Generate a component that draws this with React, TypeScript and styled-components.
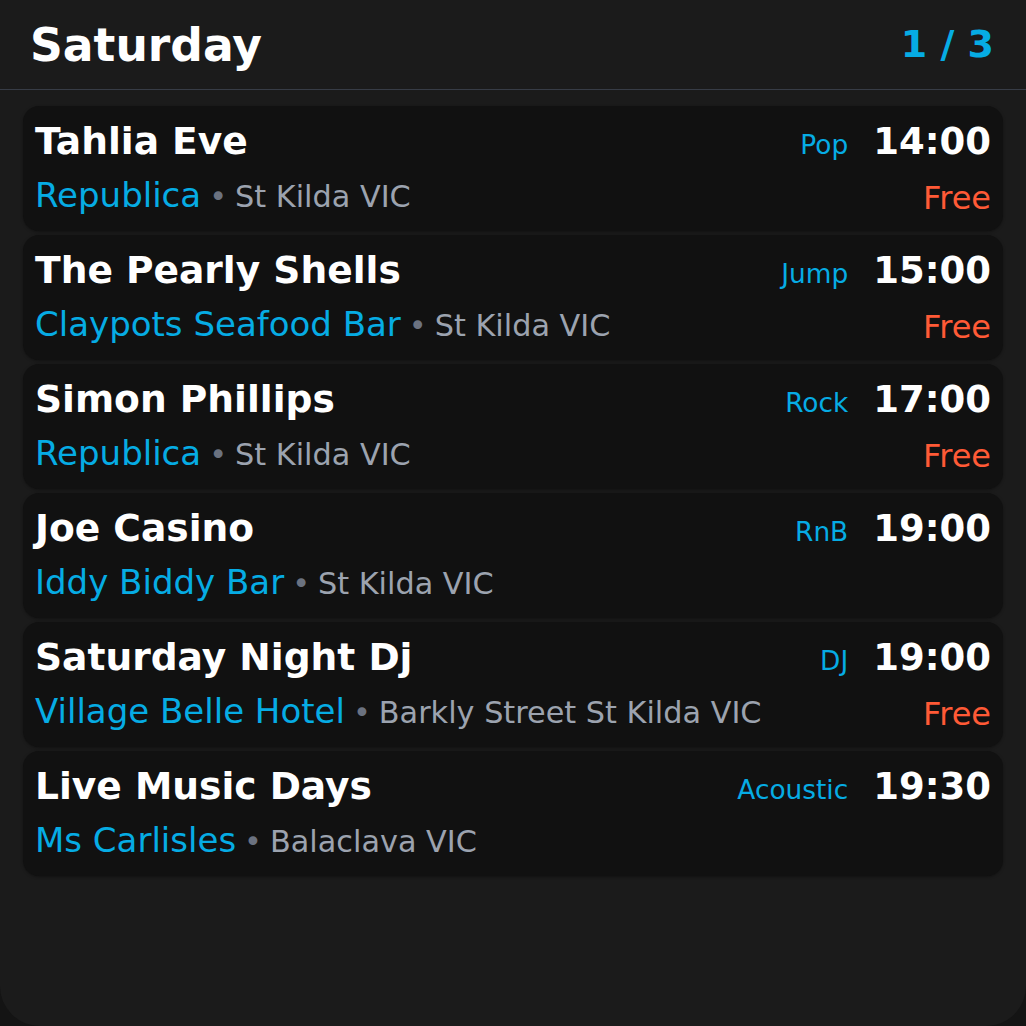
import styled, { createGlobalStyle } from 'styled-components';

interface Gig {
  name: string;
  venue: string;
  location: string;
  genre: string;
  time: string;
  price?: string;
}

const gigs: Gig[] = [
  { name: 'Tahlia Eve', venue: 'Republica', location: 'St Kilda VIC', genre: 'Pop', time: '14:00', price: 'Free' },
  { name: 'The Pearly Shells', venue: 'Claypots Seafood Bar', location: 'St Kilda VIC', genre: 'Jump', time: '15:00', price: 'Free' },
  { name: 'Simon Phillips', venue: 'Republica', location: 'St Kilda VIC', genre: 'Rock', time: '17:00', price: 'Free' },
  { name: 'Joe Casino', venue: 'Iddy Biddy Bar', location: 'St Kilda VIC', genre: 'RnB', time: '19:00' },
  { name: 'Saturday Night Dj', venue: 'Village Belle Hotel', location: 'Barkly Street St Kilda VIC', genre: 'DJ', time: '19:00', price: 'Free' },
  { name: 'Live Music Days', venue: 'Ms Carlisles', location: 'Balaclava VIC', genre: 'Acoustic', time: '19:30' },
];

export default function App() {
  return (
    <>
      <GlobalStyle />
      <Panel>
        <Header>
          <Day>Saturday</Day>
          <PageCount>1 / 3</PageCount>
        </Header>

        <List>
          {gigs.map((gig, index) => (
            <Card key={index}>
              <Left>
                <Name>{gig.name}</Name>
                <VenueLine>
                  <Venue>{gig.venue}</Venue>
                  <Location>
                    <Dot>•</Dot>
                    {gig.location}
                  </Location>
                </VenueLine>
              </Left>
              <Right>
                <TimeRow>
                  <Genre>{gig.genre}</Genre>
                  <Time>{gig.time}</Time>
                </TimeRow>
                {gig.price && <Price>{gig.price}</Price>}
              </Right>
            </Card>
          ))}
        </List>
      </Panel>
    </>
  );
}

const GlobalStyle = createGlobalStyle`
  html, body, #root {
    margin: 0;
    padding: 0;
    height: 100%;
  }

  body {
    background: #141414;
    font-family: 'DejaVu Sans', 'Liberation Sans', sans-serif;
  }
`;

const Panel = styled.div`
  height: 100vh;
  box-sizing: border-box;
  background: #1b1b1b;
  border-radius: 0 0 40px 40px;
  color: #ffffff;
  overflow: hidden;
`;

const Header = styled.div`
  display: flex;
  align-items: center;
  justify-content: space-between;
  padding: 19px 32px 17px 30px;
  border-bottom: 1px solid #373c46;
`;

const Day = styled.h1`
  margin: 0;
  font-size: 45.6px;
  font-weight: 700;
  color: #ffffff;
`;

const PageCount = styled.span`
  font-size: 38px;
  font-weight: 700;
  color: #06ace4;
  margin-top: -4px;
`;

const List = styled.div`
  display: flex;
  flex-direction: column;
  gap: 4px;
  padding: 16px 23px 0;
`;

const Card = styled.div`
  display: flex;
  justify-content: space-between;
  height: 125px;
  box-sizing: border-box;
  padding: 13px 12px 0;
  background: #111111;
  border-radius: 16px;
  box-shadow: 0 1px 3px rgba(0, 0, 0, 0.35);
`;

const Left = styled.div`
  display: flex;
  flex-direction: column;
  min-width: 0;
`;

const Name = styled.div`
  font-size: 37.6px;
  font-weight: 700;
  color: #ffffff;
  white-space: nowrap;
`;

const VenueLine = styled.div`
  margin-top: 12px;
  white-space: nowrap;
`;

const Venue = styled.span`
  font-size: 34px;
  color: #06ace4;
`;

const Location = styled.span`
  font-size: 30.3px;
  color: #9ca3af;
`;

const Dot = styled.span`
  margin: 0 8px;
  color: #6b7280;
`;

const Right = styled.div`
  display: flex;
  flex-direction: column;
  align-items: flex-end;
`;

const TimeRow = styled.div`
  display: flex;
  align-items: baseline;
  gap: 25px;
  margin-top: 1px;
`;

const Genre = styled.span`
  font-size: 26.4px;
  color: #06ace4;
`;

const Time = styled.span`
  font-size: 37px;
  font-weight: 700;
  color: #ffffff;
`;

const Price = styled.div`
  margin-top: 16px;
  font-size: 32px;
  color: #ff5a36;
`;
